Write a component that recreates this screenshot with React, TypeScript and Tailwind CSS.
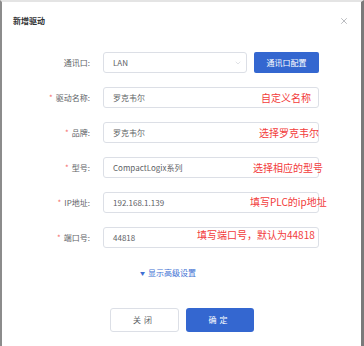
import { ChevronDown, X } from "lucide-react"

const font = { fontFamily: '"Noto Sans CJK SC", "Noto Sans", sans-serif' }

type Row = {
  label: string
  value: string
  required?: boolean
  note?: string
  noteLeft?: string
  noteTop?: string
}

const rows: Row[] = [
  { label: "驱动名称", value: "罗克韦尔", required: true, note: "自定义名称", noteLeft: "left-[157px]", noteTop: "top-[3px]" },
  { label: "品牌", value: "罗克韦尔", required: true, note: "选择罗克韦尔", noteLeft: "left-[155px]", noteTop: "top-[3px]" },
  { label: "型号", value: "CompactLogix系列", required: true, note: "选择相应的型号", noteLeft: "left-[149px]", noteTop: "top-[3px]" },
  { label: "IP地址", value: "192.168.1.139", required: true, note: "填写PLC的ip地址", noteLeft: "left-[146px]", noteTop: "top-[2px]" },
  { label: "端口号", value: "44818", required: true, note: "填写端口号，默认为44818", noteLeft: "left-[93px]", noteTop: "top-[0px]" },
]

function Label({ text, required }: { text: string; required?: boolean }) {
  return (
    <div className="flex w-[89px] shrink-0 items-center justify-end pr-[1px] text-[8px] text-[#606266]">
      {required && <span className="mr-[3px] text-[#f56c6c]">*</span>}
      <span>{text}:</span>
    </div>
  )
}

export default function App() {
  return (
    <div
      className="flex h-[346px] w-[364px] border-t-2 border-l-2 border-r-[3px] border-t-[#e4e4e4] border-l-[#8c8c8c] border-r-[#7a7a7a] bg-white"
      style={font}
    >
      <div className="flex flex-1 flex-col bg-white">
        {/* header */}
        <div className="flex h-[38px] items-center justify-between pl-[11px] pr-[12px]">
          <span className="text-[8px] font-bold text-[#303133]">新增驱动</span>
          <X className="h-[10px] w-[10px] text-[#a0a3a8]" strokeWidth={1.75} />
        </div>

        {/* form */}
        <div className="mt-[12px] flex flex-col gap-[14px]">
          <div className="flex h-[21px] items-stretch">
            <Label text="通讯口" />
            <div className="ml-[12px] flex w-[144px] items-center justify-between rounded-[3px] border border-[#dcdfe6] pl-[9px] pr-[4px] text-[8px] text-[#606266]">
              <span>LAN</span>
              <ChevronDown className="h-[8px] w-[8px] text-[#c0c4cc]" strokeWidth={1.5} />
            </div>
            <button className="ml-[7px] flex w-[65px] items-center justify-center rounded-[2px] bg-[#3467d0] text-[8px] text-white">
              通讯口配置
            </button>
          </div>

          {rows.map((r) => (
            <div key={r.label} className="flex h-[21px] items-stretch">
              <Label text={r.label} required={r.required} />
              <div className="relative ml-[12px] flex w-[216px] items-center rounded-[3px] border border-[#dcdfe6] pl-[9px] text-[8px] text-[#606266]">
                <span>{r.value}</span>
                {r.note && (
                  <span
                    className={`absolute ${r.noteLeft} ${r.noteTop} whitespace-nowrap text-[10px] leading-[14px] text-[#f23b3b]`}
                  >
                    {r.note}
                  </span>
                )}
              </div>
            </div>
          ))}
        </div>

        {/* advanced */}
        <div className="mt-[19px] flex items-center justify-center pr-[27px] text-[8px] text-[#3e6fd3]">
          <span className="mr-[3px] text-[5px]">▼</span>
          <span>显示高级设置</span>
        </div>

        {/* footer */}
        <div className="mt-[29px] flex justify-center gap-[7px]">
          <button className="h-[24px] w-[69px] rounded-[3px] border border-[#dcdfe6] bg-white text-[8px] tracking-[3px] text-[#606266]">
            关闭
          </button>
          <button className="h-[24px] w-[68px] rounded-[3px] bg-[#3467d0] text-[8px] tracking-[3px] text-white">
            确定
          </button>
        </div>
      </div>
    </div>
  )
}
